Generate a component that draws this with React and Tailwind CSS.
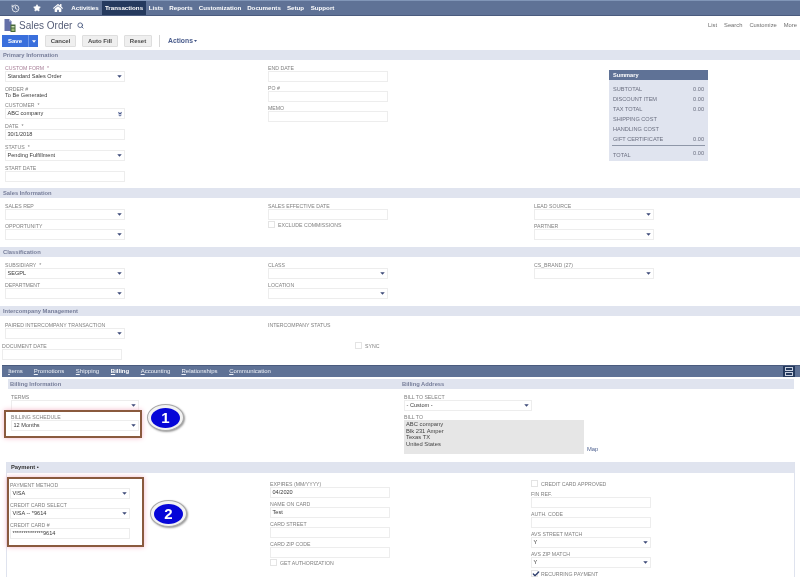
import React from 'react'
import { History, Star, Search, Check } from 'lucide-react'
import { FaHome } from 'react-icons/fa'

const navItems = [
  { name: 'Activities', w: 'w-[34px]' },
  { name: 'Transactions', w: 'w-[44px]', active: true },
  { name: 'Lists', w: 'w-[20px]' },
  { name: 'Reports', w: 'w-[30px]' },
  { name: 'Customization', w: 'w-[48px]' },
  { name: 'Documents', w: 'w-[40px]' },
  { name: 'Setup', w: 'w-[23px]' },
  { name: 'Support', w: 'w-[31px]' },
]

const tabs = [
  { first: 'I', rest: 'tems', w: 'w-[25px]' },
  { first: 'P', rest: 'romotions', w: 'w-[42px]' },
  { first: 'S', rest: 'hipping', w: 'w-[35px]' },
  { first: 'B', rest: 'illing', w: 'w-[30px]', active: true },
  { first: 'A', rest: 'ccounting', w: 'w-[41px]' },
  { first: 'R', rest: 'elationships', w: 'w-[47px]' },
  { first: 'C', rest: 'ommunication', w: 'w-[54px]' },
]

const summaryRows = [
  ['SUBTOTAL', '0.00'],
  ['DISCOUNT ITEM', '0.00'],
  ['TAX TOTAL', '0.00'],
  ['SHIPPING COST', ''],
  ['HANDLING COST', ''],
  ['GIFT CERTIFICATE', '0.00'],
]

const Label = ({ children, req, className = 'text-[#808080]' }) => (
  <div className={`h-[8px] leading-[10px] text-[5.2px] whitespace-nowrap ${className}`}>
    {children}
    {req && <span className="ml-[3px]">*</span>}
  </div>
)

const Arrow = () => (
  <svg viewBox="0 0 6 4" className="w-[5px] h-[3px] shrink-0">
    <path d="M0 0.3H6L3 3.8Z" fill="#3d4a78" />
  </svg>
)

const DoubleArrow = () => (
  <svg viewBox="0 0 6 8" className="w-[4px] h-[6px] shrink-0">
    <path d="M0.5 0.5L3 2.6L5.5 0.5V3L3 5L0.5 3ZM0.5 4.6L3 6.4L5.5 4.6V5.6L3 7.6L0.5 5.6Z" fill="#45558a" />
  </svg>
)

const Control = ({ value, kind, w = 'w-[120px]' }) => (
  <div className={`${w} h-[11px] bg-white border border-[#ededed] flex items-center justify-between pl-[1.5px] pr-[2.5px] text-[5.6px] text-[#3a3a3a] whitespace-nowrap`}>
    <span>{value}</span>
    {kind === 'select' && <Arrow />}
    {kind === 'double' && <DoubleArrow />}
  </div>
)

const Field = ({ label, req, value, kind, w, labelClass }) => (
  <div>
    <Label req={req} className={labelClass}>{label}</Label>
    <Control value={value} kind={kind} w={w} />
  </div>
)

const CheckField = ({ label, checked }) => (
  <div className="flex items-end h-[7px] gap-[3px]">
    <div className="w-[7px] h-[7px] border border-[#e4e4e4] bg-white relative shrink-0">
      {checked && <Check size={8} strokeWidth={4} className="absolute -top-[1px] -left-[0.5px] text-[#2f3f6e]" />}
    </div>
    <span className="text-[5.2px] leading-[5px] text-[#808080] whitespace-nowrap">{label}</span>
  </div>
)

const Bar = ({ children, className = '' }) => (
  <div className={`h-[10px] bg-[#e0e4ef] flex items-center text-[5.8px] font-bold text-[#767d99] whitespace-nowrap ${className}`}>
    {children}
  </div>
)

const Badge = ({ n, className }) => (
  <div className={`w-[37px] h-[27px] rounded-[50%] bg-[#f2f2f2] border border-[#a8a8a8] shadow-[1px_1px_2px_#999] flex items-center justify-center shrink-0 ${className}`}>
    <div className="w-[29px] h-[20px] rounded-[50%] bg-[#0606d8] flex items-center justify-center text-[15px] leading-none font-bold text-white">
      {n}
    </div>
  </div>
)

const DocIcon = () => (
  <svg viewBox="0 0 12 13" className="w-[12px] h-[13px]">
    <path d="M0.5 0H5L7.5 2.5V12H0.5Z" fill="#6470a8" />
    <path d="M5 0L7.5 2.5H5Z" fill="#aab2d4" />
    <rect x="6.5" y="5.5" width="5" height="7.5" fill="#47683a" />
    <rect x="7.5" y="7" width="3" height="1.5" fill="#cfe0b4" />
    <rect x="7.5" y="9.5" width="3" height="2.5" fill="#9dbb78" />
  </svg>
)

const Button = ({ children, w }) => (
  <div className={`${w} h-[12px] rounded-[1px] bg-[#efefef] border border-[#dedede] flex items-center justify-center text-[6px] font-bold text-[#4a4a4a] whitespace-nowrap`}>
    {children}
  </div>
)

const App = () => {
  return (
    <div className="w-[800px] h-[579px] overflow-hidden bg-white blur-[0.35px] font-['Liberation_Sans',Arial,sans-serif]">
      {/* top nav */}
      <div className="h-[16px] bg-[#5f7296] border-t border-t-[#8196b8] border-b border-b-[#4a5b7e] flex pl-[4px] text-white">
        <div className="w-[22px] flex items-center justify-center"><History size={9} /></div>
        <div className="w-[21px] flex items-center justify-center"><Star size={8} fill="white" /></div>
        <div className="w-[21px] flex items-center justify-center"><FaHome size={10} /></div>
        {navItems.map((item) => (
          <div key={item.name} className={`${item.w} flex items-center justify-center text-[6.2px] font-bold whitespace-nowrap ${item.active ? 'bg-[#253a5e]' : ''}`}>
            {item.name}
          </div>
        ))}
      </div>

      {/* title row */}
      <div className="h-[18px] flex items-center justify-between pl-[4px] pr-[3px]">
        <div className="flex items-center">
          <DocIcon />
          <span className="ml-[3px] text-[10px] text-[#565e78]">Sales Order</span>
          <Search size={7} strokeWidth={3} className="ml-[5px] text-[#4a5a80]" />
        </div>
        <div className="flex gap-[7px] text-[5.8px] text-[#6e6e6e]">
          <span>List</span>
          <span>Search</span>
          <span>Customize</span>
          <span>More</span>
        </div>
      </div>

      {/* buttons */}
      <div className="h-[16px] flex items-start pl-[2px] pt-[1px]">
        <div className="w-[36px] h-[12px] bg-[#3a6fdc] flex text-white text-[6px] font-bold">
          <div className="w-[26px] flex items-center justify-center">Save</div>
          <div className="w-[10px] border-l border-l-[#6f97e8] flex items-center justify-center">
            <svg viewBox="0 0 6 4" className="w-[4px] h-[3px]"><path d="M0 0H6L3 4Z" fill="white" /></svg>
          </div>
        </div>
        <div className="ml-[7px] flex gap-[6px]">
          <Button w="w-[31px]">Cancel</Button>
          <Button w="w-[36px]">Auto Fill</Button>
          <Button w="w-[28px]">Reset</Button>
        </div>
        <div className="ml-[7px] h-[12px] border-l border-l-[#d8d8d8]" />
        <div className="ml-[8px] h-[12px] flex items-center gap-[1px] text-[6.8px] font-bold text-[#4a5c8c]">
          Actions
          <svg viewBox="0 0 6 4" className="w-[3px] h-[2px]"><path d="M0 0H6L3 4Z" fill="#3f5283" /></svg>
        </div>
      </div>

      {/* primary information */}
      <Bar className="pl-[3px]">Primary Information</Bar>
      <div className="h-[128px] grid grid-cols-[263px_341px_99px] pl-[5px] pt-[3px]">
        <div className="flex flex-col gap-[2px]">
          <Field label="CUSTOM FORM" req value="Standard Sales Order" kind="select" labelClass="text-[#a87f98]" />
          <div>
            <Label>ORDER #</Label>
            <div className="h-[6px] leading-[6px] text-[5.6px] text-[#444]">To Be Generated</div>
          </div>
          <Field label="CUSTOMER" req value="ABC company" kind="double" />
          <Field label="DATE" req value="30/1/2018" />
          <Field label="STATUS" req value="Pending Fulfillment" kind="select" />
          <Field label="START DATE" />
        </div>
        <div className="flex flex-col gap-[1px]">
          <Field label="END DATE" />
          <Field label="PO #" />
          <Field label="MEMO" />
        </div>
        <div className="mt-[7px] h-[91px] bg-[#e0e4ef]">
          <div className="h-[10px] bg-[#5f7296] flex items-center pl-[4px] text-[5.6px] font-bold text-white">Summary</div>
          <div className="px-[3px] pt-[4px] text-[5.6px] text-[#6b6f80]">
            {summaryRows.map(([name, val]) => (
              <div key={name} className="h-[10px] flex items-center justify-between px-[1px]">
                <span>{name}</span>
                <span>{val}</span>
              </div>
            ))}
            <div className="mt-[0.5px] pt-[5px] border-t border-t-[#8f97a8] flex justify-between px-[1px]">
              <span>TOTAL</span>
              <span className="-mt-[2px]">0.00</span>
            </div>
          </div>
        </div>
      </div>

      {/* sales information */}
      <Bar className="pl-[3px]">Sales Information</Bar>
      <div className="h-[49px] grid grid-cols-[263px_266px_120px] pl-[5px] pt-[3px]">
        <div className="flex flex-col gap-[1px]">
          <Field label="SALES REP" kind="select" />
          <Field label="OPPORTUNITY" kind="select" />
        </div>
        <div className="flex flex-col gap-[1px]">
          <Field label="SALES EFFECTIVE DATE" />
          <CheckField label="EXCLUDE COMMISSIONS" />
        </div>
        <div className="flex flex-col gap-[1px]">
          <Field label="LEAD SOURCE" kind="select" />
          <Field label="PARTNER" kind="select" />
        </div>
      </div>

      {/* classification */}
      <Bar className="pl-[3px]">Classification</Bar>
      <div className="h-[49px] grid grid-cols-[263px_266px_120px] pl-[5px] pt-[3px]">
        <div className="flex flex-col gap-[1px]">
          <Field label="SUBSIDIARY" req value="SEGPL" kind="select" />
          <Field label="DEPARTMENT" kind="select" />
        </div>
        <div className="flex flex-col gap-[1px]">
          <Field label="CLASS" kind="select" />
          <Field label="LOCATION" kind="select" />
        </div>
        <div>
          <Field label="CS_BRAND (27)" kind="select" />
        </div>
      </div>

      {/* intercompany */}
      <Bar className="pl-[3px]">Intercompany Management</Bar>
      <div className="h-[49px] grid grid-cols-[263px_87px_100px] pl-[5px] pt-[4px]">
        <div className="flex flex-col gap-[2px]">
          <Field label="PAIRED INTERCOMPANY TRANSACTION" kind="select" />
          <div className="-ml-[3px]">
            <Field label="DOCUMENT DATE" />
          </div>
        </div>
        <Label>INTERCOMPANY STATUS</Label>
        <div className="mt-[22px]">
          <CheckField label="SYNC" />
        </div>
      </div>

      {/* tab bar */}
      <div className="ml-[2px] h-[12px] bg-[#5f7296] border-t border-t-[#4a5b7e] flex items-center justify-between pl-[1px] pr-[5px]">
        <div className="flex items-center">
          {tabs.map((t) => (
            <div key={t.rest} className={`${t.w} shrink-0 text-center text-[6px] whitespace-nowrap ${t.active ? 'font-bold text-white' : 'text-[#eef1f7]'}`}>
              <span className="underline">{t.first}</span>{t.rest}
            </div>
          ))}
        </div>
        <div className="w-[12px] h-[11px] bg-[#253a5e] flex flex-col items-center justify-center gap-[1px]">
          <div className="w-[8px] h-[4px] border border-[#c8d0e0]" />
          <div className="w-[8px] h-[4px] border border-[#c8d0e0]" />
        </div>
      </div>

      {/* billing */}
      <div className="h-[85px] pt-[2px] pl-[8px] pr-[6px]">
        <div className="flex bg-[#e0e4ef]">
          <Bar className="w-[392px] h-[9px] pl-[2px]">Billing Information</Bar>
          <Bar className="h-[9px] pl-[2px]">Billing Address</Bar>
        </div>
        <div className="flex pt-[3px]">
          <div className="w-[400px] -ml-[4px] shrink-0">
            <div className="pl-[7px]">
              <Field label="TERMS" kind="select" w="w-[128px]" />
            </div>
            <div className="flex items-start -mt-[1px]">
              <div className="w-[138px] h-[28px] border-2 border-[#8a5a3e] shadow-[0_0_5px_#f4b6c8] pl-[5px]">
                <Field label="BILLING SCHEDULE" value="12 Months" kind="select" w="w-[128px]" />
              </div>
              <Badge n="1" className="ml-[5px] -mt-[6px]" />
            </div>
          </div>
          <div className="flex flex-col gap-[1px]">
            <Field label="BILL TO SELECT" value="- Custom -" kind="select" w="w-[128px]" />
            <Label>BILL TO</Label>
            <div className="flex items-end -mt-[1px]">
              <div className="w-[180px] h-[34px] bg-[#e6e6e6] pl-[2px] pt-[1px] text-[5.8px] leading-[6.5px] text-[#444]">
                <div>ABC company</div>
                <div>Blk 231 Amper</div>
                <div>Texas TX</div>
                <div>United States</div>
              </div>
              <span className="ml-[3px] text-[5.8px] text-[#4f6291]">Map</span>
            </div>
          </div>
        </div>
      </div>

      {/* payment */}
      <div className="ml-[6px] w-[789px] border-x border-x-[#dfe3ee]">
        <Bar className="h-[11px] pl-[4px] !text-[#333]">Payment •</Bar>
        <div className="flex pt-[4px]">
          <div className="flex items-start w-[263px] shrink-0">
            <div className="w-[137px] h-[70px] border-2 border-[#8a5a3e] shadow-[0_0_5px_#f4b6c8] pl-[1px] pt-[0.5px] flex flex-col gap-[1px]">
              <Field label="PAYMENT METHOD" value="VISA" kind="select" />
              <Field label="CREDIT CARD SELECT" value="VISA -- *9614" kind="select" />
              <Field label="CREDIT CARD #" value="**************9614" />
            </div>
            <Badge n="2" className="ml-[6px] mt-[23px]" />
          </div>
          <div className="w-[261px] shrink-0 flex flex-col gap-[1px] mt-[2px]">
            <Field label="EXPIRES (MM/YYYY)" value="04/2020" />
            <Field label="NAME ON CARD" value="Test" />
            <Field label="CARD STREET" />
            <Field label="CARD ZIP CODE" />
            <CheckField label="GET AUTHORIZATION" />
          </div>
          <div className="flex flex-col gap-[1px] pt-[3px]">
            <CheckField label="CREDIT CARD APPROVED" />
            <div className="mt-[1px]"><Field label="FIN REF." /></div>
            <Field label="AUTH. CODE" />
            <Field label="AVS STREET MATCH" value="Y" kind="select" />
            <Field label="AVS ZIP MATCH" value="Y" kind="select" />
            <div className="mt-[1px]"><CheckField label="RECURRING PAYMENT" checked /></div>
          </div>
        </div>
      </div>
    </div>
  )
}

export default App
